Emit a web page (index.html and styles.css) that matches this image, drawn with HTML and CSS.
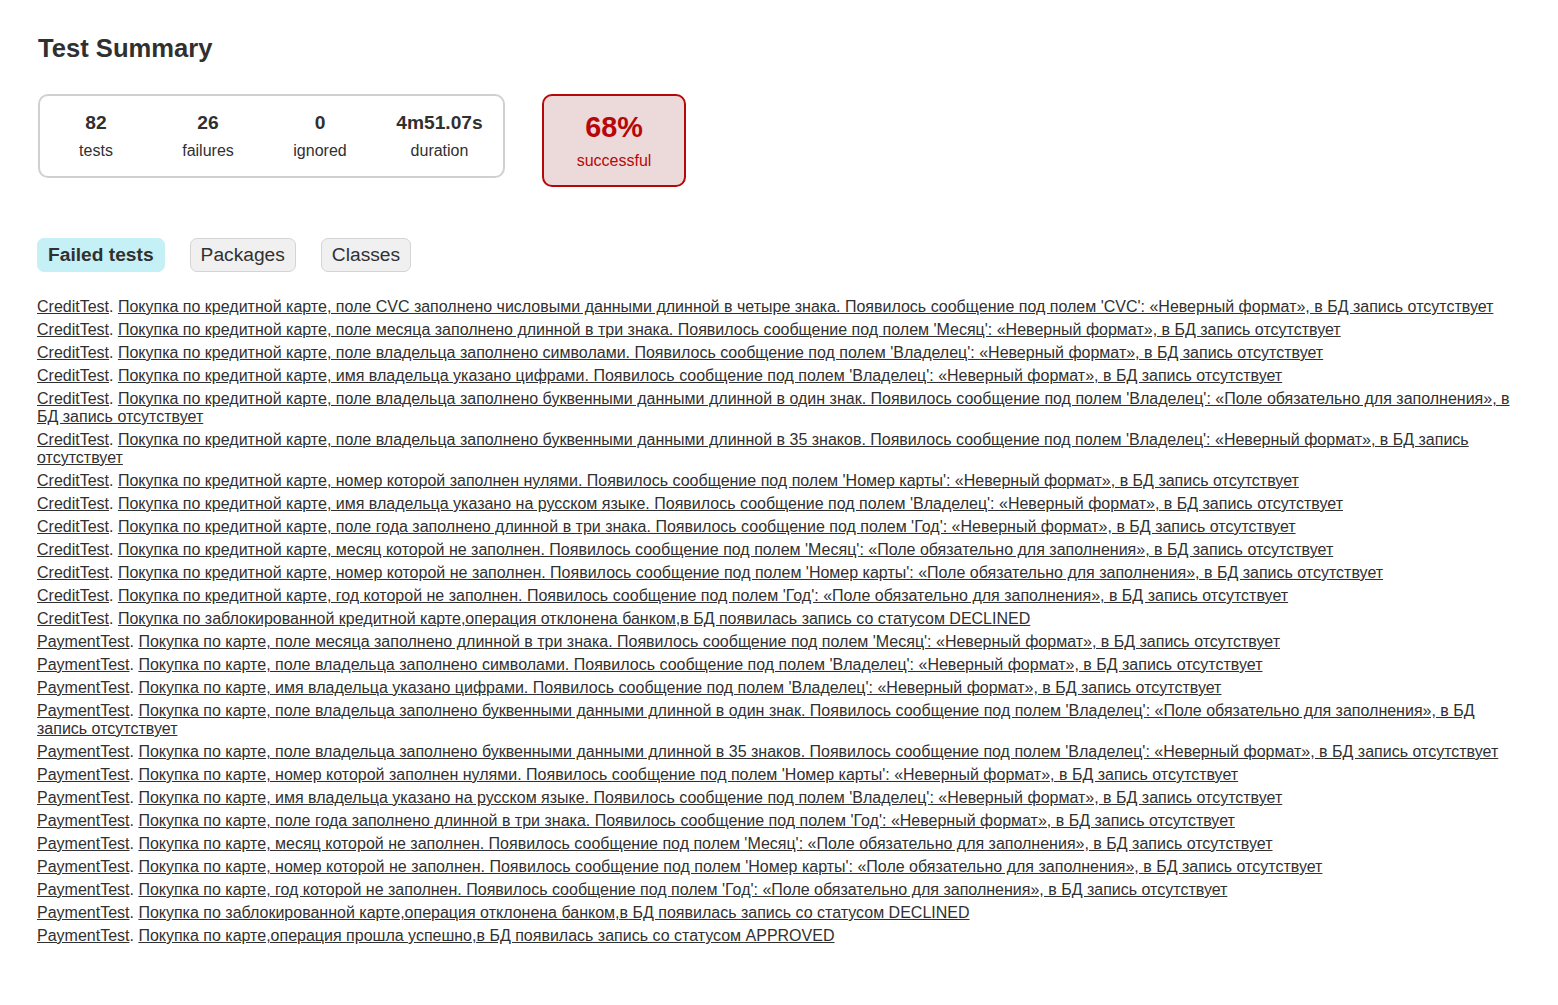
FILE: index.html
```html
<!DOCTYPE html>
<html lang="ru">
<head>
<meta charset="utf-8">
<title>Test results - Test Summary</title>
<link rel="stylesheet" href="styles.css">
</head>
<body>
<div class="content">
  <h1 class="title">Test Summary</h1>
  <div class="summary">
    <div class="summary-group">
      <div class="info-box">
        <div class="counter">82</div>
        <p>tests</p>
      </div>
      <div class="info-box">
        <div class="counter">26</div>
        <p>failures</p>
      </div>
      <div class="info-box">
        <div class="counter">0</div>
        <p>ignored</p>
      </div>
      <div class="info-box info-box-duration">
        <div class="counter">4m51.07s</div>
        <p>duration</p>
      </div>
    </div>
    <div class="success-rate">
      <div class="percent">68%</div>
      <p>successful</p>
    </div>
  </div>

  <ul class="tab-links">
    <li class="tab tab-selected"><a href="#tab0">Failed tests</a></li>
    <li class="tab"><a href="#tab1">Packages</a></li>
    <li class="tab"><a href="#tab2">Classes</a></li>
  </ul>

  <ul class="link-list">
    <li><a href="#">CreditTest</a>. <a href="#">Покупка по кредитной карте, поле CVC заполнено числовыми данными длинной в четыре знака. Появилось сообщение под полем 'CVC': «Неверный формат», в БД запись отсутствует</a></li>
    <li><a href="#">CreditTest</a>. <a href="#">Покупка по кредитной карте, поле месяца заполнено длинной в три знака. Появилось сообщение под полем 'Месяц': «Неверный формат», в БД запись отсутствует</a></li>
    <li><a href="#">CreditTest</a>. <a href="#">Покупка по кредитной карте, поле владельца заполнено символами. Появилось сообщение под полем 'Владелец': «Неверный формат», в БД запись отсутствует</a></li>
    <li><a href="#">CreditTest</a>. <a href="#">Покупка по кредитной карте, имя владельца указано цифрами. Появилось сообщение под полем 'Владелец': «Неверный формат», в БД запись отсутствует</a></li>
    <li><a href="#">CreditTest</a>. <a href="#">Покупка по кредитной карте, поле владельца заполнено буквенными данными длинной в один знак. Появилось сообщение под полем 'Владелец': «Поле обязательно для заполнения», в БД запись отсутствует</a></li>
    <li><a href="#">CreditTest</a>. <a href="#">Покупка по кредитной карте, поле владельца заполнено буквенными данными длинной в 35 знаков. Появилось сообщение под полем 'Владелец': «Неверный формат», в БД запись отсутствует</a></li>
    <li><a href="#">CreditTest</a>. <a href="#">Покупка по кредитной карте, номер которой заполнен нулями. Появилось сообщение под полем 'Номер карты': «Неверный формат», в БД запись отсутствует</a></li>
    <li><a href="#">CreditTest</a>. <a href="#">Покупка по кредитной карте, имя владельца указано на русском языке. Появилось сообщение под полем 'Владелец': «Неверный формат», в БД запись отсутствует</a></li>
    <li><a href="#">CreditTest</a>. <a href="#">Покупка по кредитной карте, поле года заполнено длинной в три знака. Появилось сообщение под полем 'Год': «Неверный формат», в БД запись отсутствует</a></li>
    <li><a href="#">CreditTest</a>. <a href="#">Покупка по кредитной карте, месяц которой не заполнен. Появилось сообщение под полем 'Месяц': «Поле обязательно для заполнения», в БД запись отсутствует</a></li>
    <li><a href="#">CreditTest</a>. <a href="#">Покупка по кредитной карте, номер которой не заполнен. Появилось сообщение под полем 'Номер карты': «Поле обязательно для заполнения», в БД запись отсутствует</a></li>
    <li><a href="#">CreditTest</a>. <a href="#">Покупка по кредитной карте, год которой не заполнен. Появилось сообщение под полем 'Год': «Поле обязательно для заполнения», в БД запись отсутствует</a></li>
    <li><a href="#">CreditTest</a>. <a href="#">Покупка по заблокированной кредитной карте,операция отклонена банком,в БД появилась запись со статусом DECLINED</a></li>
    <li><a href="#">PaymentTest</a>. <a href="#">Покупка по карте, поле месяца заполнено длинной в три знака. Появилось сообщение под полем 'Месяц': «Неверный формат», в БД запись отсутствует</a></li>
    <li><a href="#">PaymentTest</a>. <a href="#">Покупка по карте, поле владельца заполнено символами. Появилось сообщение под полем 'Владелец': «Неверный формат», в БД запись отсутствует</a></li>
    <li><a href="#">PaymentTest</a>. <a href="#">Покупка по карте, имя владельца указано цифрами. Появилось сообщение под полем 'Владелец': «Неверный формат», в БД запись отсутствует</a></li>
    <li><a href="#">PaymentTest</a>. <a href="#">Покупка по карте, поле владельца заполнено буквенными данными длинной в один знак. Появилось сообщение под полем 'Владелец': «Поле обязательно для заполнения», в БД запись отсутствует</a></li>
    <li><a href="#">PaymentTest</a>. <a href="#">Покупка по карте, поле владельца заполнено буквенными данными длинной в 35 знаков. Появилось сообщение под полем 'Владелец': «Неверный формат», в БД запись отсутствует</a></li>
    <li><a href="#">PaymentTest</a>. <a href="#">Покупка по карте, номер которой заполнен нулями. Появилось сообщение под полем 'Номер карты': «Неверный формат», в БД запись отсутствует</a></li>
    <li><a href="#">PaymentTest</a>. <a href="#">Покупка по карте, имя владельца указано на русском языке. Появилось сообщение под полем 'Владелец': «Неверный формат», в БД запись отсутствует</a></li>
    <li><a href="#">PaymentTest</a>. <a href="#">Покупка по карте, поле года заполнено длинной в три знака. Появилось сообщение под полем 'Год': «Неверный формат», в БД запись отсутствует</a></li>
    <li><a href="#">PaymentTest</a>. <a href="#">Покупка по карте, месяц которой не заполнен. Появилось сообщение под полем 'Месяц': «Поле обязательно для заполнения», в БД запись отсутствует</a></li>
    <li><a href="#">PaymentTest</a>. <a href="#">Покупка по карте, номер которой не заполнен. Появилось сообщение под полем 'Номер карты': «Поле обязательно для заполнения», в БД запись отсутствует</a></li>
    <li><a href="#">PaymentTest</a>. <a href="#">Покупка по карте, год которой не заполнен. Появилось сообщение под полем 'Год': «Поле обязательно для заполнения», в БД запись отсутствует</a></li>
    <li><a href="#">PaymentTest</a>. <a href="#">Покупка по заблокированной карте,операция отклонена банком,в БД появилась запись со статусом DECLINED</a></li>
    <li><a href="#">PaymentTest</a>. <a href="#">Покупка по карте,операция прошла успешно,в БД появилась запись со статусом APPROVED</a></li>
  </ul>
</div>
</body>
</html>
```

FILE: styles.css
```css
* {
  box-sizing: border-box;
}

html, body {
  margin: 0;
  padding: 0;
  background: #ffffff;
}

body {
  font-family: "Liberation Sans", Arial, sans-serif;
  font-size: 16px;
  color: #303030;
}

a, a:visited {
  color: #303030;
}

.content {
  padding: 34px 38px 30px 37px;
}

.title {
  margin: 0 0 0 1px;
  font-size: 25.6px;
  line-height: 29px;
  font-weight: bold;
  white-space: nowrap;
}

.summary {
  display: flex;
  align-items: flex-start;
  margin: 31px 0 0 1px;
}

.summary-group {
  display: flex;
  border: 2px solid #d0d0d0;
  border-radius: 10px;
}

.info-box {
  width: 112px;
  padding: 16px 0;
  text-align: center;
}

.info-box-duration {
  width: 127px;
}

.info-box p,
.success-rate p {
  margin: 0;
  line-height: 18px;
}

.counter {
  font-size: 19.2px;
  line-height: 22px;
  font-weight: bold;
  margin-bottom: 8px;
}

.success-rate {
  margin-left: 37px;
  width: 144px;
  padding: 15px 0;
  text-align: center;
  border: 2px solid #b60808;
  border-radius: 10px;
  background-color: #ecdada;
  color: #b60808;
}

.percent {
  font-size: 28.8px;
  line-height: 33px;
  font-weight: bold;
  margin-bottom: 8px;
}

.tab-links {
  display: flex;
  list-style: none;
  margin: 51px 0 0 0;
  padding: 0;
}

.tab {
  margin-right: 25px;
  padding: 5px 10px;
  border: 1px solid #d4d4d4;
  border-radius: 7px;
  background-color: #f0f0f0;
}

.tab a {
  display: block;
  font-size: 19.2px;
  line-height: 22px;
  text-decoration: none;
  outline: none;
}

.tab-selected {
  background-color: #c5f0f5;
  border-color: #c5f0f5;
}

.tab-selected a {
  font-weight: bold;
}

.link-list {
  list-style: none;
  margin: 26px 0 0 0;
  padding: 0;
}

.link-list li {
  line-height: 18px;
  margin-bottom: 5px;
}
```
